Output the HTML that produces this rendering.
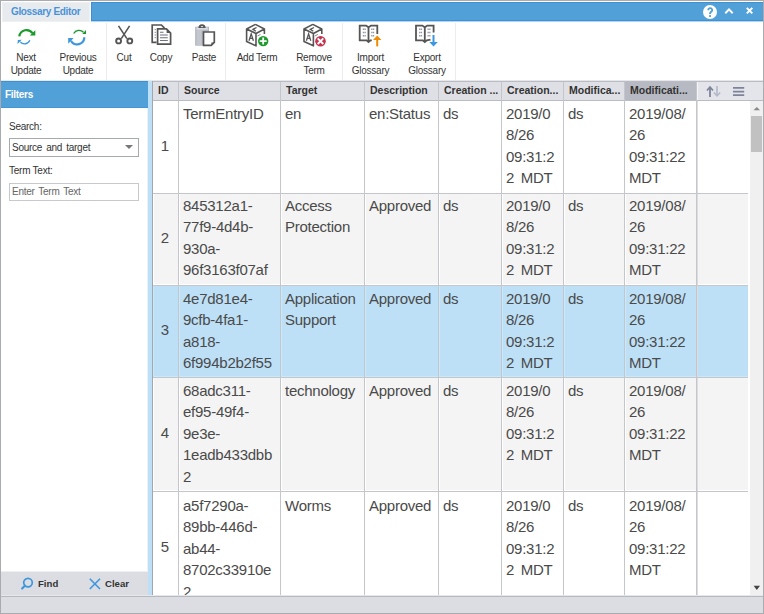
<!DOCTYPE html>
<html><head><meta charset="utf-8">
<style>
*{box-sizing:border-box;margin:0;padding:0}
html,body{width:764px;height:614px;overflow:hidden;background:#fff}
body{position:relative;font-family:"Liberation Sans",sans-serif;color:#333}
.a{position:absolute}
#frame{left:0;top:0;width:764px;height:614px;border:1px solid #a9abb0;}
.tb{font-size:10px;letter-spacing:-0.25px;color:#333;text-align:center;line-height:13px;white-space:nowrap}
.sep{width:1px;background:#ececee;top:23px;height:57px}
.hd{top:82px;height:18px;font-size:10.5px;font-weight:bold;color:#333;line-height:16px;white-space:nowrap;overflow:hidden;padding-left:6px}
.vl{width:1px;background:#c4c6cc}
.hl{height:1px;background:#c4c6cc}
.cell{font-size:15px;letter-spacing:-0.25px;line-height:21.4px;color:#4a4a4a;white-space:nowrap;padding-left:4px}
.id{font-size:15px;color:#4a4a4a;text-align:center;width:26px}
</style></head><body>
<div class="a" id="frame"></div>

<!-- Title tab & bar -->
<div class="a" style="left:2px;top:2px;width:88px;height:20px;background:#e8ebee;border:1px solid #eef0f2"></div>
<div class="a" style="left:11px;top:5px;font-size:10px;letter-spacing:-0.35px;font-weight:bold;color:#4a92d8;line-height:13px">Glossary Editor</div>
<div class="a" style="left:91px;top:2px;width:672px;height:19px;background:#52a0d8;border:1px solid #3d90d2;border-right:none"></div><div class="a" style="left:91px;top:21px;width:672px;height:1px;background:#b4d6f0"></div>
<!-- help icon -->
<svg class="a" style="left:700px;top:2px" width="63" height="20" viewBox="0 0 63 20">
 <circle cx="10" cy="10" r="7" fill="#fff"/>
 <path d="M8.2 8.2 A2 2 0 1 1 11.1 9.9 Q10 10.5 10 12" fill="none" stroke="#52a0d8" stroke-width="1.9"/>
 <rect x="9.1" y="13.1" width="1.8" height="1.9" fill="#52a0d8"/>
 <path d="M25.3 11.2 L29 7.4 L32.7 11.2" fill="none" stroke="#fff" stroke-width="2"/>
 <path d="M46.8 5.9 L52.3 11.4 M52.3 5.9 L46.8 11.4" fill="none" stroke="#fff" stroke-width="2"/>
</svg>
<!-- Toolbar -->
<div class="a" style="left:1px;top:80px;width:762px;height:1px;background:#e6e7ea"></div>
<div class="a sep" style="left:106px"></div>
<div class="a sep" style="left:225px"></div>
<div class="a sep" style="left:342px"></div>
<div class="a sep" style="left:455px"></div>

<!-- icons -->
<svg class="a" style="left:14px;top:24px" width="26" height="26" viewBox="0 0 26 26">
 <path d="M5.3 12.3 A7.3 7.3 0 0 1 18.5 9.2" fill="none" stroke="#1a9a2a" stroke-width="2.2"/>
 <path d="M21.3 6.2 L21.3 11.6 L15.8 11.6 Z" fill="#1a9a2a"/>
 <path d="M15.8 16.3 A5.6 5.6 0 0 1 6.3 17.8" fill="none" stroke="#3d97dd" stroke-width="1.3"/>
 <path d="M3.5 20 L3.8 16 L7.8 15.7 Z" fill="#3d97dd"/>
</svg>
<svg class="a" style="left:64px;top:24px" width="26" height="26" viewBox="0 0 26 26">
 <path d="M9.7 9.5 A6 6 0 0 1 19.5 8.3" fill="none" stroke="#1a9a2a" stroke-width="1.3"/>
 <path d="M22 6.1 L22 9.9 L18.2 9.9 Z" fill="#1a9a2a"/>
 <path d="M20.3 13.2 A7.1 7.1 0 0 1 7 16.7" fill="none" stroke="#3d97dd" stroke-width="2.2"/>
 <path d="M4.2 19.8 L4.2 14 L9.6 14 Z" fill="#3d97dd"/>
</svg>
<svg class="a" style="left:110px;top:22px" width="30" height="30" viewBox="0 0 30 30">
 <g fill="none" stroke="#555" stroke-width="1.6">
 <path d="M8.5 3.9 L16.9 16.6 M19.6 3.9 L11.3 16.6"/>
 <circle cx="8.6" cy="18.9" r="2.45" stroke-width="1.9"/><circle cx="19.8" cy="18.9" r="2.45" stroke-width="1.9"/>
 </g>
</svg>
<svg class="a" style="left:146px;top:22px" width="30" height="30" viewBox="0 0 30 30">
 <path d="M10.6 20.4 L6.2 20.4 L6.2 3 L15.4 3 L18 5.6 L18 7" fill="none" stroke="#555" stroke-width="1.7"/>
 <path d="M11.6 6.9 L20.4 6.9 L24.6 11.1 L24.6 22.2 L11.6 22.2 Z" fill="#fff" stroke="#555" stroke-width="1.7"/>
 <path d="M20.6 7 L20.6 10.9 L24.5 10.9 Z" fill="#555"/>
 <path d="M14 10.3 L17.5 10.3 M14 13 L21.8 13 M14 15.7 L21.8 15.7 M14 18.5 L21.8 18.5" stroke="#6c7283" stroke-width="1.1"/>
 <path d="M8.6 7.6 L10 7.6 M8.6 10.3 L10 10.3 M8.6 13 L10 13 M8.6 15.6 L10 15.6" stroke="#8a90a0" stroke-width="1"/>
</svg>
<svg class="a" style="left:188px;top:22px" width="30" height="30" viewBox="0 0 30 30">
 <rect x="7.1" y="4.7" width="13.9" height="19" fill="#b5b9c2"/>
 <rect x="8.6" y="7.6" width="5" height="15.8" fill="#c3c6cd"/>
 <rect x="8.4" y="5.6" width="11.4" height="2" fill="#dcdee3"/>
 <path d="M10.4 5.9 A3.55 3.55 0 0 1 17.6 5.9 Z" fill="#555"/>
 <ellipse cx="14" cy="4.6" rx="1.3" ry="0.7" fill="#e6e7ea"/>
 <path d="M15.5 10 L26.3 10 L26.3 20.3 L23.2 23.3 L15.5 23.3 Z" fill="#fff" stroke="#555" stroke-width="1.7"/>
 <path d="M23.4 23 L23.4 20.5 L26 20.5 Z" fill="#555"/>
</svg>
<svg class="a" style="left:242px;top:22px" width="30" height="30" viewBox="0 0 30 30">
 <g transform="translate(0,0)">
 <path d="M13.4 2.4 L4.6 7 L4.6 19.5 L14 23.8 L14 11.5 L4.6 7 M14 11.5 L22.4 7 L13.4 2.4 M22.4 7 L22.4 12" fill="none" stroke="#555" stroke-width="1.6" stroke-linejoin="round"/>
 <path d="M7 18.8 L9.2 11.8 L11.4 18.8 M7.8 16.4 L10.6 16.4" fill="none" stroke="#555" stroke-width="1.3"/>
 <path d="M14.6 5.5 L10.9 7.3 L13.9 9.2" fill="none" stroke="#555" stroke-width="1.3"/>
 <path d="M15.5 14 L18.5 12.4" fill="none" stroke="#888" stroke-width="1"/>
 </g>
 <circle cx="21.2" cy="19.1" r="5.2" fill="#1c9a2c"/>
 <path d="M21.2 15.6 L21.2 22.6 M17.7 19.1 L24.7 19.1" stroke="#fff" stroke-width="1.8"/>
</svg>
<svg class="a" style="left:300px;top:22px" width="30" height="30" viewBox="0 0 30 30">
 <g transform="translate(-0.6,0)">
 <path d="M13.4 2.4 L4.6 7 L4.6 19.5 L14 23.8 L14 11.5 L4.6 7 M14 11.5 L22.4 7 L13.4 2.4 M22.4 7 L22.4 12" fill="none" stroke="#555" stroke-width="1.6" stroke-linejoin="round"/>
 <path d="M7 18.8 L9.2 11.8 L11.4 18.8 M7.8 16.4 L10.6 16.4" fill="none" stroke="#555" stroke-width="1.3"/>
 <path d="M14.6 5.5 L10.9 7.3 L13.9 9.2" fill="none" stroke="#555" stroke-width="1.3"/>
 <path d="M15.5 14 L18.5 12.4" fill="none" stroke="#888" stroke-width="1"/>
 </g>
 <circle cx="20.5" cy="19.2" r="5.3" fill="#c2344f"/>
 <path d="M17.7 16.4 L23.3 22 M23.3 16.4 L17.7 22" stroke="#fff" stroke-width="1.9"/>
</svg>
<svg class="a" style="left:355px;top:22px" width="30" height="30" viewBox="0 0 30 30">
 <path d="M22.3 12 L22.3 3.6 L16 3.6 L13.5 5.3 L11 3.6 L4.7 3.6 L4.7 18.3 L11.5 18.3 L13.5 20 L15.5 18.3 L16.8 18.3 M13.5 5.3 L13.5 18.8" fill="none" stroke="#555" stroke-width="1.8"/>
 <path d="M7.8 7.3 L10.8 7.3 M7.8 10.4 L10.8 10.4 M7.8 13.8 L10.8 13.8 M16.2 7.3 L19.2 7.3 M16.2 10.4 L19.2 10.4 M16.2 13.8 L19.2 13.8" stroke="#9096a5" stroke-width="1.5" stroke-dasharray="1.3 0.4"/>
 <path d="M22.2 24.4 L22.2 16.5" stroke="#f08a00" stroke-width="2"/>
 <path d="M18 18 L22.2 13.6 L26.4 18 Z" fill="#f08a00"/>
</svg>
<svg class="a" style="left:412px;top:22px" width="30" height="30" viewBox="0 0 30 30">
 <path d="M21.6 10.5 L21.6 3.6 L15.3 3.6 L12.8 5.3 L10.3 3.6 L4 3.6 L4 18.3 L10.8 18.3 L12.8 20 L14.8 18.3 L18.5 17.6 M12.8 5.3 L12.8 18.8" fill="none" stroke="#555" stroke-width="1.8"/>
 <path d="M7.1 7.3 L10.1 7.3 M7.1 10.4 L10.1 10.4 M7.1 13.8 L10.1 13.8 M15.5 7.3 L18.5 7.3 M15.5 10.4 L18.5 10.4 M15.5 13.8 L18.5 13.8" stroke="#9096a5" stroke-width="1.5" stroke-dasharray="1.3 0.4"/>
 <path d="M21.5 13 L21.5 21" stroke="#3b97de" stroke-width="2"/>
 <path d="M17.3 20 L25.8 20 L21.5 24.6 Z" fill="#3b97de"/>
</svg>

<!-- toolbar labels -->
<div class="a tb" style="left:0px;width:52px;top:51px">Next<br>Update</div>
<div class="a tb" style="left:52px;width:52px;top:51px">Previous<br>Update</div>
<div class="a tb" style="left:108px;width:32px;top:51px">Cut</div>
<div class="a tb" style="left:143px;width:36px;top:51px">Copy</div>
<div class="a tb" style="left:184px;width:40px;top:51px">Paste</div>
<div class="a tb" style="left:227px;width:60px;top:51px">Add Term</div>
<div class="a tb" style="left:287px;width:54px;top:51px">Remove<br>Term</div>
<div class="a tb" style="left:343px;width:55px;top:51px">Import<br>Glossary</div>
<div class="a tb" style="left:399px;width:56px;top:51px">Export<br>Glossary</div>

<!-- Filters panel -->
<div class="a" style="left:1px;top:81px;width:147px;height:27px;background:#52a0d8;border-top:1px solid #3d90d2;border-bottom:1px solid #4596d5"></div>
<div class="a" style="left:5px;top:88px;font-size:10px;letter-spacing:-0.3px;font-weight:bold;color:#fff;line-height:13px">Filters</div>
<div class="a" style="left:147px;top:108px;width:1px;height:463px;background:#e6f3fc"></div><div class="a" style="left:148px;top:81px;width:4px;height:515px;background:#bde0f7"></div>
<div class="a" style="left:9px;top:120px;font-size:10px;letter-spacing:-0.25px;color:#333;line-height:13px">Search:</div>
<div class="a" style="left:9px;top:138px;width:130px;height:19px;border:1px solid #a5a9b0;background:#fff"></div>
<div class="a" style="left:12px;top:141px;font-size:10px;letter-spacing:-0.25px;color:#333;line-height:13px;word-spacing:1.5px">Source and target</div>
<svg class="a" style="left:124px;top:144px" width="10" height="6" viewBox="0 0 10 6"><path d="M1 1 L9 1 L5 5 Z" fill="#777"/></svg>
<div class="a" style="left:9px;top:164px;font-size:10px;letter-spacing:-0.25px;color:#333;line-height:13px">Term Text:</div>
<div class="a" style="left:9px;top:183px;width:130px;height:18px;border:1px solid #c6c9ce;background:#fff"></div>
<div class="a" style="left:12px;top:185px;font-size:10px;letter-spacing:-0.25px;color:#666;line-height:13px;word-spacing:1.3px">Enter Term Text</div>

<div class="a" style="left:1px;top:571px;width:147px;height:1px;background:#eeeff2"></div><div class="a" style="left:1px;top:572px;width:147px;height:23px;background:#dcdde2"></div>
<svg class="a" style="left:18px;top:574px" width="20" height="20" viewBox="0 0 20 20"><circle cx="10" cy="8.6" r="4.3" fill="none" stroke="#3d97dd" stroke-width="1.7"/><path d="M6.9 11.7 L4.1 14.6" stroke="#3d97dd" stroke-width="2.1" stroke-linecap="round"/></svg>
<div class="a" style="left:38px;top:577px;font-size:9.6px;font-weight:bold;color:#333;line-height:13px">Find</div>
<svg class="a" style="left:88px;top:577px" width="14" height="14" viewBox="0 0 14 14"><path d="M1.8 1.8 L12 12 M12 1.8 L1.8 12" stroke="#3d97dd" stroke-width="1.6"/></svg>
<div class="a" style="left:105px;top:577px;font-size:9.6px;font-weight:bold;color:#333;line-height:13px">Clear</div>

<!-- status bar -->
<div class="a" style="left:1px;top:595px;width:762px;height:1px;background:#e6e7ea"></div>
<div class="a" style="left:1px;top:596px;width:762px;height:1px;background:#b7b9c0"></div>
<div class="a" style="left:1px;top:597px;width:762px;height:16px;background:#dcdde2"></div>

<!-- Table header -->
<div class="a" style="left:152px;top:81px;width:611px;height:20px;background:#dfe0e5;border-top:1px solid #b9bcc3;border-bottom:1px solid #b9bcc3"></div>
<div class="a" style="left:625px;top:82px;width:71px;height:18px;background:#b7bac2"></div>
<div class="a" style="left:697px;top:82px;width:66px;height:18px;background:#e4e5ea;border-left:1px solid #f4f5f7"></div>
<div class="a hd" style="left:152px;width:26px">ID</div>
<div class="a hd" style="left:178px;width:102px">Source</div>
<div class="a hd" style="left:280px;width:84px">Target</div>
<div class="a hd" style="left:364px;width:74px">Description</div>
<div class="a hd" style="left:438px;width:63px">Creation ...</div>
<div class="a hd" style="left:501px;width:62px">Creation...</div>
<div class="a hd" style="left:563px;width:61px">Modifica...</div>
<div class="a hd" style="left:624px;width:72px">Modificati...</div>
<svg class="a" style="left:704px;top:84px" width="20" height="15" viewBox="0 0 20 15">
 <path d="M6 3.5 L6 13" stroke="#7d8398" stroke-width="1.8"/><path d="M3 6.5 L6 3 L9 6.5" fill="none" stroke="#7d8398" stroke-width="1.7"/>
 <path d="M13 2 L13 11.5" stroke="#b3b8c8" stroke-width="1.6"/><path d="M9.8 8.5 L13 12 L16.2 8.5" fill="none" stroke="#b3b8c8" stroke-width="1.5"/>
</svg>
<svg class="a" style="left:732px;top:84px" width="14" height="14" viewBox="0 0 14 14"><path d="M1 3.9 L12.2 3.9 M1 7.6 L12.2 7.6 M1 11.2 L12.2 11.2" stroke="#7d8398" stroke-width="1.7"/></svg>

<!-- rows backgrounds -->
<div class="a" style="left:153px;top:194px;width:595px;height:91px;background:#f4f4f4;border-bottom:1px solid #ffffff"></div>
<div class="a" style="left:153px;top:194px;width:1px;height:91px;background:#ffffff"></div>
<div class="a" style="left:179px;top:194px;width:1px;height:91px;background:#ffffff"></div>
<div class="a" style="left:281px;top:194px;width:1px;height:91px;background:#ffffff"></div>
<div class="a" style="left:365px;top:194px;width:1px;height:91px;background:#ffffff"></div>
<div class="a" style="left:439px;top:194px;width:1px;height:91px;background:#ffffff"></div>
<div class="a" style="left:502px;top:194px;width:1px;height:91px;background:#ffffff"></div>
<div class="a" style="left:564px;top:194px;width:1px;height:91px;background:#ffffff"></div>
<div class="a" style="left:625px;top:194px;width:1px;height:91px;background:#ffffff"></div>
<div class="a" style="left:697px;top:194px;width:1px;height:91px;background:#ffffff"></div>
<div class="a" style="left:153px;top:286px;width:595px;height:91px;background:#bde0f7;border-bottom:1px solid #c6eafc"></div>
<div class="a" style="left:153px;top:286px;width:1px;height:91px;background:#c6eafc"></div>
<div class="a" style="left:179px;top:286px;width:1px;height:91px;background:#c6eafc"></div>
<div class="a" style="left:281px;top:286px;width:1px;height:91px;background:#c6eafc"></div>
<div class="a" style="left:365px;top:286px;width:1px;height:91px;background:#c6eafc"></div>
<div class="a" style="left:439px;top:286px;width:1px;height:91px;background:#c6eafc"></div>
<div class="a" style="left:502px;top:286px;width:1px;height:91px;background:#c6eafc"></div>
<div class="a" style="left:564px;top:286px;width:1px;height:91px;background:#c6eafc"></div>
<div class="a" style="left:625px;top:286px;width:1px;height:91px;background:#c6eafc"></div>
<div class="a" style="left:697px;top:286px;width:1px;height:91px;background:#c6eafc"></div>
<div class="a" style="left:153px;top:378px;width:595px;height:113px;background:#f4f4f4;border-bottom:1px solid #ffffff"></div>
<div class="a" style="left:153px;top:378px;width:1px;height:113px;background:#ffffff"></div>
<div class="a" style="left:179px;top:378px;width:1px;height:113px;background:#ffffff"></div>
<div class="a" style="left:281px;top:378px;width:1px;height:113px;background:#ffffff"></div>
<div class="a" style="left:365px;top:378px;width:1px;height:113px;background:#ffffff"></div>
<div class="a" style="left:439px;top:378px;width:1px;height:113px;background:#ffffff"></div>
<div class="a" style="left:502px;top:378px;width:1px;height:113px;background:#ffffff"></div>
<div class="a" style="left:564px;top:378px;width:1px;height:113px;background:#ffffff"></div>
<div class="a" style="left:625px;top:378px;width:1px;height:113px;background:#ffffff"></div>
<div class="a" style="left:697px;top:378px;width:1px;height:113px;background:#ffffff"></div>

<!-- grid lines -->
<div class="a" style="left:152px;top:81px;width:1px;height:514px;background:#a3a6ad"></div>
<div class="a vl" style="left:178px;top:82px;height:513px"></div>
<div class="a vl" style="left:280px;top:82px;height:513px"></div>
<div class="a vl" style="left:364px;top:82px;height:513px"></div>
<div class="a vl" style="left:438px;top:82px;height:513px"></div>
<div class="a vl" style="left:501px;top:82px;height:513px"></div>
<div class="a vl" style="left:563px;top:82px;height:513px"></div>
<div class="a vl" style="left:624px;top:82px;height:513px"></div>
<div class="a vl" style="left:696px;top:82px;height:513px"></div>
<div class="a" style="left:697px;top:101px;width:1px;height:494px;background:#dcdde1"></div>
<div class="a hl" style="left:153px;top:193px;width:595px"></div>
<div class="a hl" style="left:153px;top:285px;width:595px"></div>
<div class="a hl" style="left:153px;top:377px;width:595px"></div>
<div class="a hl" style="left:153px;top:491px;width:595px"></div>

<!-- scrollbar -->
<div class="a" style="left:750px;top:101px;width:13px;height:494px;background:#f0f0f0"></div>
<svg class="a" style="left:751px;top:104px" width="11" height="8" viewBox="0 0 11 8"><path d="M2.5 6.2 L5.8 3 L9 6.2 Z" fill="#888"/></svg>
<div class="a" style="left:751px;top:116px;width:11px;height:36px;background:#c1c1c1"></div>
<svg class="a" style="left:751px;top:583px" width="11" height="8" viewBox="0 0 11 8"><path d="M2.6 2.8 L9 2.8 L5.8 7 Z" fill="#444"/></svg>

<!-- Row 1 -->
<div class="a id" style="left:152px;top:137px">1</div>
<div class="a cell" style="left:179px;top:103px">TermEntryID</div>
<div class="a cell" style="left:281px;top:103px">en</div>
<div class="a cell" style="left:365px;top:103px">en:Status</div>
<div class="a cell" style="left:439px;top:103px">ds</div>
<div class="a cell" style="left:502px;top:103px">2019/0<br>8/26<br>09:31:2<br>2<span style="word-spacing:2.7px"> </span>MDT</div>
<div class="a cell" style="left:564px;top:103px">ds</div>
<div class="a cell" style="left:625px;top:103px">2019/08/<br>26<br>09:31:22<br>MDT</div>

<!-- Row 2 -->
<div class="a id" style="left:152px;top:229px">2</div>
<div class="a cell" style="left:179px;top:195px">845312a1-<br>77f9-4d4b-<br>930a-<br>96f3163f07af</div>
<div class="a cell" style="left:281px;top:195px">Access<br>Protection</div>
<div class="a cell" style="left:365px;top:195px">Approved</div>
<div class="a cell" style="left:439px;top:195px">ds</div>
<div class="a cell" style="left:502px;top:195px">2019/0<br>8/26<br>09:31:2<br>2<span style="word-spacing:2.7px"> </span>MDT</div>
<div class="a cell" style="left:564px;top:195px">ds</div>
<div class="a cell" style="left:625px;top:195px">2019/08/<br>26<br>09:31:22<br>MDT</div>

<!-- Row 3 -->
<div class="a id" style="left:152px;top:321px">3</div>
<div class="a cell" style="left:179px;top:288px">4e7d81e4-<br>9cfb-4fa1-<br>a818-<br>6f994b2b2f55</div>
<div class="a cell" style="left:281px;top:288px">Application<br>Support</div>
<div class="a cell" style="left:365px;top:288px">Approved</div>
<div class="a cell" style="left:439px;top:288px">ds</div>
<div class="a cell" style="left:502px;top:288px">2019/0<br>8/26<br>09:31:2<br>2<span style="word-spacing:2.7px"> </span>MDT</div>
<div class="a cell" style="left:564px;top:288px">ds</div>
<div class="a cell" style="left:625px;top:288px">2019/08/<br>26<br>09:31:22<br>MDT</div>

<!-- Row 4 -->
<div class="a id" style="left:152px;top:424px">4</div>
<div class="a cell" style="left:179px;top:380px">68adc311-<br>ef95-49f4-<br>9e3e-<br>1eadb433dbb<br>2</div>
<div class="a cell" style="left:281px;top:380px">technology</div>
<div class="a cell" style="left:365px;top:380px">Approved</div>
<div class="a cell" style="left:439px;top:380px">ds</div>
<div class="a cell" style="left:502px;top:380px">2019/0<br>8/26<br>09:31:2<br>2<span style="word-spacing:2.7px"> </span>MDT</div>
<div class="a cell" style="left:564px;top:380px">ds</div>
<div class="a cell" style="left:625px;top:380px">2019/08/<br>26<br>09:31:22<br>MDT</div>

<!-- Row 5 (clipped) -->
<div class="a" style="left:152px;top:492px;width:598px;height:103px;overflow:hidden">
<div class="a id" style="left:0px;top:46px">5</div>
<div class="a cell" style="left:27px;top:3px">a5f7290a-<br>89bb-446d-<br>ab44-<br>8702c33910e<br>2</div>
<div class="a cell" style="left:129px;top:3px">Worms</div>
<div class="a cell" style="left:213px;top:3px">Approved</div>
<div class="a cell" style="left:287px;top:3px">ds</div>
<div class="a cell" style="left:350px;top:3px">2019/0<br>8/26<br>09:31:2<br>2<span style="word-spacing:2.7px"> </span>MDT</div>
<div class="a cell" style="left:412px;top:3px">ds</div>
<div class="a cell" style="left:473px;top:3px">2019/08/<br>26<br>09:31:22<br>MDT</div>
</div>

</body></html>
